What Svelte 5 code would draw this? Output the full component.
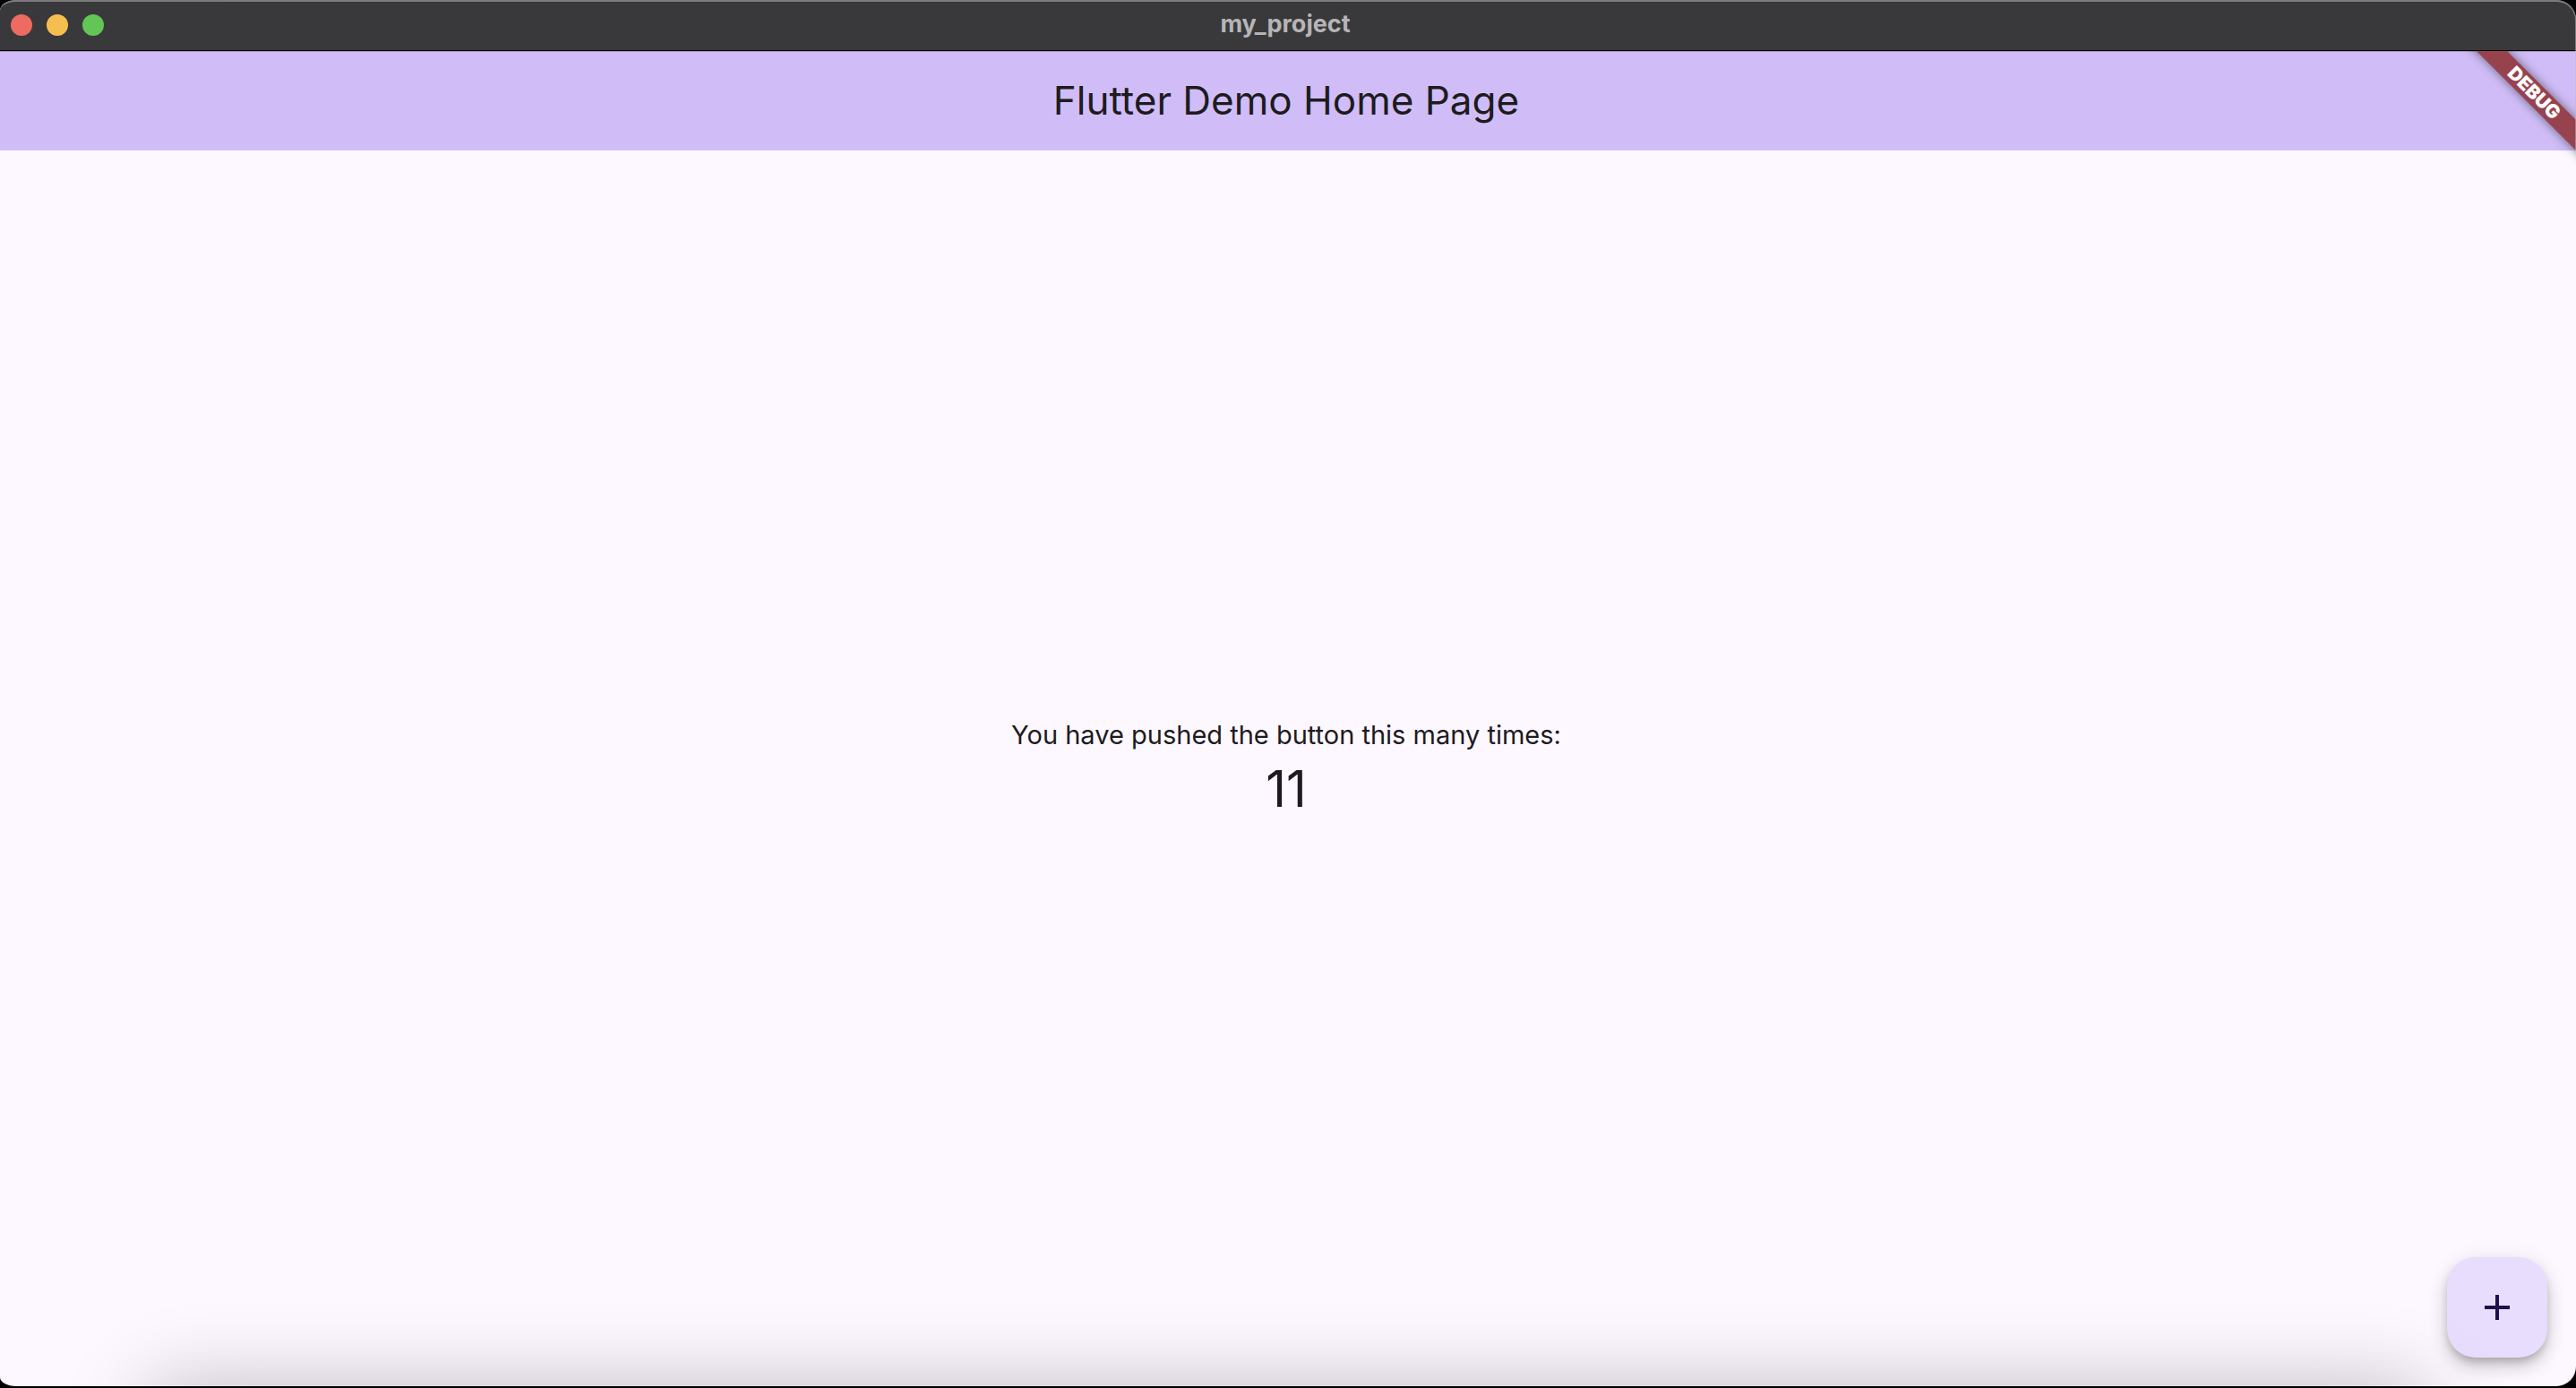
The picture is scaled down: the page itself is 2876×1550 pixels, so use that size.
<script>
  let count = $state(11);
</script>

<div class="window">
  <header class="titlebar">
    <div class="lights">
      <button class="light close" aria-label="Close"></button>
      <button class="light minimize" aria-label="Minimize"></button>
      <button class="light zoom" aria-label="Zoom"></button>
    </div>
    <div class="name">my_project</div>
  </header>

  <div class="app">
    <div class="appbar">
      <h1>Flutter Demo Home Page</h1>
    </div>
    <main>
      <p class="label">You have pushed the button this many times:</p>
      <p class="count">{count}</p>
    </main>

    <div class="banner-area">
      <div class="banner">DEBUG</div>
    </div>

    <button class="fab" aria-label="Increment" onclick={() => count++}>
      <svg viewBox="0 0 24 24" aria-hidden="true">
        <path d="M19 13h-6v6h-2v-6H5v-2h6V5h2v6h6v2z" />
      </svg>
    </button>
    <div class="dock-shadow"></div>
  </div>
  <div class="rim"></div>
</div>

<style>
  :global(body) {
    margin: 0;
    background: #000;
  }
  .window {
    box-sizing: border-box;
    position: relative;
    display: flex;
    flex-direction: column;
    height: calc(100vh - 2px);
    overflow: hidden;
    border-radius: 18px 22px 22px 18px / 12px 22px 22px 10px;
    font-family: Inter, "Liberation Sans", sans-serif;
    color: #1d1b20;
    background: #fdf8ff;
  }
  .titlebar {
    display: grid;
    grid-template-columns: 1fr auto 1fr;
    align-items: center;
    height: 56px;
    background: #39393b;
    border-bottom: 1px solid #000;
  }
  .lights {
    display: flex;
    gap: 16px;
    padding-left: 12px;
  }
  .light {
    width: 24px;
    height: 24px;
    padding: 0;
    border: 0;
    border-radius: 50%;
  }
  .close { background: #ed6b60; }
  .minimize { background: #f5bf50; }
  .zoom { background: #62c555; }
  .name {
    font-size: 27px;
    line-height: 32px;
    font-weight: 700;
    color: #b5b5b6;
    padding: 0 6px 2px 0;
  }
  .app {
    position: relative;
    display: flex;
    flex-direction: column;
    flex: 1;
    overflow: hidden;
  }
  .appbar {
    box-sizing: border-box;
    display: flex;
    align-items: center;
    justify-content: center;
    height: 111px;
    padding-bottom: 2px;
    border-top: 1px solid #a898c4;
    background: #d0bdf7;
  }
  h1 {
    margin: 0;
    font-size: 44px;
    line-height: 56px;
    font-weight: 400;
    padding-right: 4px;
  }
  main {
    flex: 1;
    display: flex;
    flex-direction: column;
    align-items: center;
    justify-content: center;
    padding: 6px 4px 0 0;
  }
  p {
    margin: 0;
  }
  .label {
    font-size: 29px;
    line-height: 40px;
  }
  .count {
    font-size: 56px;
    line-height: 80px;
  }
  .banner-area {
    position: absolute;
    top: 0;
    right: 0;
    width: 160px;
    height: 160px;
    overflow: hidden;
  }
  .banner {
    position: absolute;
    top: 35px;
    right: -73px;
    width: 240px;
    height: 24px;
    line-height: 24px;
    text-align: center;
    font-size: 21px;
    font-weight: 900;
    color: #fff;
    background: #97434e;
    box-shadow: 0 0 12px rgba(0, 0, 0, 0.5);
    transform: rotate(45deg);
  }
  .fab {
    position: absolute;
    right: 32px;
    bottom: 32px;
    display: grid;
    place-items: center;
    width: 112px;
    height: 112px;
    padding: 0;
    border: 0;
    border-radius: 32px;
    background: #e8ddfc;
    box-shadow:
      0 6px 10px -2px rgba(0, 0, 0, 0.2),
      0 12px 20px rgba(0, 0, 0, 0.14),
      0 2px 24px rgba(0, 0, 0, 0.08);
  }
  .fab svg {
    width: 48px;
    height: 48px;
    fill: #210f48;
  }
  .dock-shadow {
    position: absolute;
    left: 160px;
    right: 160px;
    top: 100%;
    height: 100px;
    border-radius: 40px;
    box-shadow: 0 0 90px rgba(0, 0, 0, 0.25);
    pointer-events: none;
  }
  .rim {
    position: absolute;
    inset: 0 0 auto 0;
    height: 168px;
    box-sizing: border-box;
    border: 0 solid rgba(190, 190, 192, 0.5);
    border-width: 2px 1px 0 0;
    border-radius: 18px 22px 0 0 / 12px 22px 0 0;
    pointer-events: none;
  }
</style>
